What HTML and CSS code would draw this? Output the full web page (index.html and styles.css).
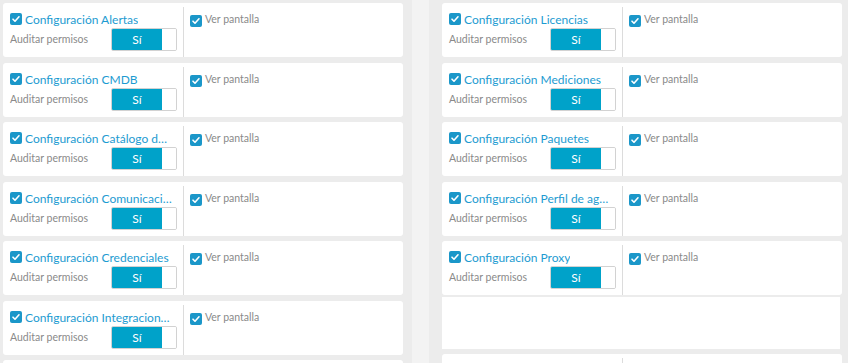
FILE: index.html
```html
<!DOCTYPE html>
<html lang="es">
<head>
<meta charset="utf-8">
<title>Permisos de configuración</title>
<link rel="stylesheet" href="styles.css">
</head>
<body>
<div class="page">
  <div class="col col-left">
    <div class="card">
      <div class="main">
        <div class="title-row"><span class="cb"><svg viewBox="0 0 12 12"><path d="M3 6.2l2 2 4-4.4" /></svg></span><span class="title">Configuración Alertas</span></div>
        <div class="audit-row"><span class="audit">Auditar permisos</span><span class="toggle"><span class="on">Sí</span><span class="off"></span></span></div>
      </div>
      <div class="side"><span class="cb"><svg viewBox="0 0 12 12"><path d="M3 6.2l2 2 4-4.4" /></svg></span><span class="view">Ver pantalla</span></div>
    </div>
    <div class="card">
      <div class="main">
        <div class="title-row"><span class="cb"><svg viewBox="0 0 12 12"><path d="M3 6.2l2 2 4-4.4" /></svg></span><span class="title">Configuración CMDB</span></div>
        <div class="audit-row"><span class="audit">Auditar permisos</span><span class="toggle"><span class="on">Sí</span><span class="off"></span></span></div>
      </div>
      <div class="side"><span class="cb"><svg viewBox="0 0 12 12"><path d="M3 6.2l2 2 4-4.4" /></svg></span><span class="view">Ver pantalla</span></div>
    </div>
    <div class="card">
      <div class="main">
        <div class="title-row"><span class="cb"><svg viewBox="0 0 12 12"><path d="M3 6.2l2 2 4-4.4" /></svg></span><span class="title">Configuración Catálogo de servicios</span></div>
        <div class="audit-row"><span class="audit">Auditar permisos</span><span class="toggle"><span class="on">Sí</span><span class="off"></span></span></div>
      </div>
      <div class="side"><span class="cb"><svg viewBox="0 0 12 12"><path d="M3 6.2l2 2 4-4.4" /></svg></span><span class="view">Ver pantalla</span></div>
    </div>
    <div class="card">
      <div class="main">
        <div class="title-row"><span class="cb"><svg viewBox="0 0 12 12"><path d="M3 6.2l2 2 4-4.4" /></svg></span><span class="title">Configuración Comunicaciones</span></div>
        <div class="audit-row"><span class="audit">Auditar permisos</span><span class="toggle"><span class="on">Sí</span><span class="off"></span></span></div>
      </div>
      <div class="side"><span class="cb"><svg viewBox="0 0 12 12"><path d="M3 6.2l2 2 4-4.4" /></svg></span><span class="view">Ver pantalla</span></div>
    </div>
    <div class="card">
      <div class="main">
        <div class="title-row"><span class="cb"><svg viewBox="0 0 12 12"><path d="M3 6.2l2 2 4-4.4" /></svg></span><span class="title">Configuración Credenciales</span></div>
        <div class="audit-row"><span class="audit">Auditar permisos</span><span class="toggle"><span class="on">Sí</span><span class="off"></span></span></div>
      </div>
      <div class="side"><span class="cb"><svg viewBox="0 0 12 12"><path d="M3 6.2l2 2 4-4.4" /></svg></span><span class="view">Ver pantalla</span></div>
    </div>
    <div class="card">
      <div class="main">
        <div class="title-row"><span class="cb"><svg viewBox="0 0 12 12"><path d="M3 6.2l2 2 4-4.4" /></svg></span><span class="title">Configuración Integraciones</span></div>
        <div class="audit-row"><span class="audit">Auditar permisos</span><span class="toggle"><span class="on">Sí</span><span class="off"></span></span></div>
      </div>
      <div class="side"><span class="cb"><svg viewBox="0 0 12 12"><path d="M3 6.2l2 2 4-4.4" /></svg></span><span class="view">Ver pantalla</span></div>
    </div>
    <div class="card">
      <div class="main"></div>
      <div class="side"></div>
    </div>
  </div>

  <div class="stripe"></div>

  <div class="col col-right">
    <div class="card">
      <div class="main">
        <div class="title-row"><span class="cb"><svg viewBox="0 0 12 12"><path d="M3 6.2l2 2 4-4.4" /></svg></span><span class="title">Configuración Licencias</span></div>
        <div class="audit-row"><span class="audit">Auditar permisos</span><span class="toggle"><span class="on">Sí</span><span class="off"></span></span></div>
      </div>
      <div class="side"><span class="cb"><svg viewBox="0 0 12 12"><path d="M3 6.2l2 2 4-4.4" /></svg></span><span class="view">Ver pantalla</span></div>
    </div>
    <div class="card">
      <div class="main">
        <div class="title-row"><span class="cb"><svg viewBox="0 0 12 12"><path d="M3 6.2l2 2 4-4.4" /></svg></span><span class="title">Configuración Mediciones</span></div>
        <div class="audit-row"><span class="audit">Auditar permisos</span><span class="toggle"><span class="on">Sí</span><span class="off"></span></span></div>
      </div>
      <div class="side"><span class="cb"><svg viewBox="0 0 12 12"><path d="M3 6.2l2 2 4-4.4" /></svg></span><span class="view">Ver pantalla</span></div>
    </div>
    <div class="card">
      <div class="main">
        <div class="title-row"><span class="cb"><svg viewBox="0 0 12 12"><path d="M3 6.2l2 2 4-4.4" /></svg></span><span class="title">Configuración Paquetes</span></div>
        <div class="audit-row"><span class="audit">Auditar permisos</span><span class="toggle"><span class="on">Sí</span><span class="off"></span></span></div>
      </div>
      <div class="side"><span class="cb"><svg viewBox="0 0 12 12"><path d="M3 6.2l2 2 4-4.4" /></svg></span><span class="view">Ver pantalla</span></div>
    </div>
    <div class="card">
      <div class="main">
        <div class="title-row"><span class="cb"><svg viewBox="0 0 12 12"><path d="M3 6.2l2 2 4-4.4" /></svg></span><span class="title">Configuración Perfil de agente</span></div>
        <div class="audit-row"><span class="audit">Auditar permisos</span><span class="toggle"><span class="on">Sí</span><span class="off"></span></span></div>
      </div>
      <div class="side"><span class="cb"><svg viewBox="0 0 12 12"><path d="M3 6.2l2 2 4-4.4" /></svg></span><span class="view">Ver pantalla</span></div>
    </div>
    <div class="card">
      <div class="main">
        <div class="title-row"><span class="cb"><svg viewBox="0 0 12 12"><path d="M3 6.2l2 2 4-4.4" /></svg></span><span class="title">Configuración Proxy</span></div>
        <div class="audit-row"><span class="audit">Auditar permisos</span><span class="toggle"><span class="on">Sí</span><span class="off"></span></span></div>
      </div>
      <div class="side"><span class="cb"><svg viewBox="0 0 12 12"><path d="M3 6.2l2 2 4-4.4" /></svg></span><span class="view">Ver pantalla</span></div>
    </div>
    <div class="blank"></div>
    <div class="card card-tail">
      <div class="main"></div>
      <div class="side"></div>
    </div>
  </div>
</div>
</body>
</html>
```

FILE: styles.css
```css
* { box-sizing: border-box; }

html, body {
  margin: 0;
  padding: 0;
  background: #ececec;
  font-family: Lato, "Liberation Sans", Arial, sans-serif;
}

.page {
  display: flex;
  height: 363px;
  overflow: hidden;
}

.col {
  display: flex;
  flex-direction: column;
  gap: 5.5px;
  width: 400px;
  flex: 0 0 400px;
  padding-top: 3px;
}

.col-left { margin-left: 3px; }

.stripe {
  flex: 0 0 17px;
  margin-left: 9px;
  background: #f3f3f3;
}

.col-right { margin-left: 13px; }

.card {
  flex: 0 0 54px;
  height: 54px;
  background: #fff;
  border-radius: 3px;
  display: grid;
  grid-template-columns: 180px 1fr;
}

.main {
  padding: 10px 0 0 7px;
  min-width: 0;
}

.title-row {
  display: flex;
  align-items: flex-start;
  height: 15px;
  padding-right: 11px;
}

.cb {
  flex: 0 0 12px;
  width: 12px;
  height: 12px;
  border-radius: 2px;
  background: #1b97c9;
  display: inline-flex;
}

.cb svg {
  width: 12px;
  height: 12px;
  fill: none;
  stroke: #fff;
  stroke-width: 1.6;
  stroke-linecap: round;
  stroke-linejoin: round;
}

.title {
  margin-left: 3px;
  margin-top: -1px;
  font-size: 12px;
  line-height: 16px;
  color: #1d9bd1;
  white-space: nowrap;
  overflow: hidden;
  text-overflow: ellipsis;
  min-width: 0;
}

.audit-row {
  display: flex;
  align-items: flex-start;
}

.audit {
  flex: 0 0 101px;
  font-size: 10.5px;
  line-height: 14px;
  margin-top: 4px;
  color: #8a8a8a;
  white-space: nowrap;
}

.toggle {
  display: flex;
  width: 66px;
  height: 23px;
  border: 1px solid #d2d2d2;
  border-radius: 2px;
  overflow: hidden;
}

.toggle .on {
  flex: 0 0 50px;
  background: #00a2c9;
  color: #fff;
  font-size: 12px;
  line-height: 21px;
  text-align: center;
}

.toggle .off {
  flex: 1;
  background: #fff;
}

.side {
  margin-top: 4px;
  border-left: 1px solid #dcdcdc;
  padding: 7px 0 0 6px;
  display: flex;
  align-items: flex-start;
}

.side .cb { margin-top: 1px; }

.view {
  margin-left: 3px;
  margin-top: -2px;
  font-size: 10.5px;
  line-height: 14px;
  color: #8a8a8a;
}

.blank {
  flex: 0 0 52px;
  margin-top: -3.5px;
  background: #fff;
  width: 398px;
}

.card-tail { margin-top: -0.5px; }
```
